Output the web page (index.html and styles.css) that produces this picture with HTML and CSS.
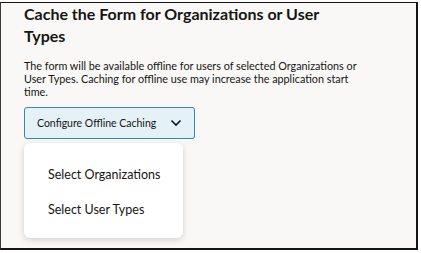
FILE: index.html
```html
<!DOCTYPE html>
<html>
<head>
<meta charset="utf-8">
<link rel="stylesheet" href="styles.css">
</head>
<body>
<div class="frame">
  <h1 class="title">Cache the Form for Organizations or User Types</h1>
  <p class="desc">The form will be available offline for users of selected Organizations or User Types. Caching for offline use may increase the application start time.</p>
  <div class="menu-wrap">
    <button class="btn">
      <span>Configure Offline Caching</span>
      <svg class="chev" width="12" height="8" viewBox="0 0 12 8"><path d="M1.5 1.5 L6 6 L10.5 1.5" fill="none" stroke="#161513" stroke-width="1.6"/></svg>
    </button>
    <ul class="menu">
      <li>Select Organizations</li>
      <li>Select User Types</li>
    </ul>
  </div>
</div>
</body>
</html>
```
FILE: styles.css
```css
html, body { margin: 0; padding: 0; background: #ffffff; }
body { font-family: "Lato", "Noto Sans", sans-serif; color: #161513; }
.frame {
  margin-top: 2px;
  width: 418px;
  height: 248px;
  box-sizing: border-box;
  background: #f9f8f6;
  border-top: 1px solid #161513;
  border-left: 1px solid #3a3a3a;
  border-right: 2px solid #161513;
  border-bottom: 2px solid #161513;
  padding: 0 0 0 23px;
}
.title {
  margin: 0;
  padding-top: 0;
  font-size: 16px;
  line-height: 22px;
  font-weight: 700;
  width: 330px;
}
.desc {
  margin: 12px 0 0 0;
  font-size: 10.8px;
  line-height: 13px;
  width: 345px;
}
.menu-wrap { position: relative; margin-top: 9px; width: 171px; }
.btn {
  display: flex;
  align-items: center;
  justify-content: space-between;
  width: 171px;
  height: 32px;
  padding: 0 12px 0 12px;
  box-sizing: border-box;
  background: #e4f1f7;
  border: 1px solid #3a87a8;
  border-radius: 3px;
  font-family: inherit;
  font-size: 10.5px;
  color: #161513;
}
.chev { display: block; }
.menu {
  position: absolute;
  left: 0;
  top: 36px;
  width: 159px;
  height: 95px;
  margin: 0;
  padding: 14px 0 0 0;
  box-sizing: border-box;
  list-style: none;
  background: #ffffff;
  border-radius: 6px;
  box-shadow: 0 2px 6px rgba(0,0,0,0.16);
}
.menu li {
  padding-left: 24px;
  font-size: 12.5px;
  line-height: 35px;
  color: #161513;
}
```
